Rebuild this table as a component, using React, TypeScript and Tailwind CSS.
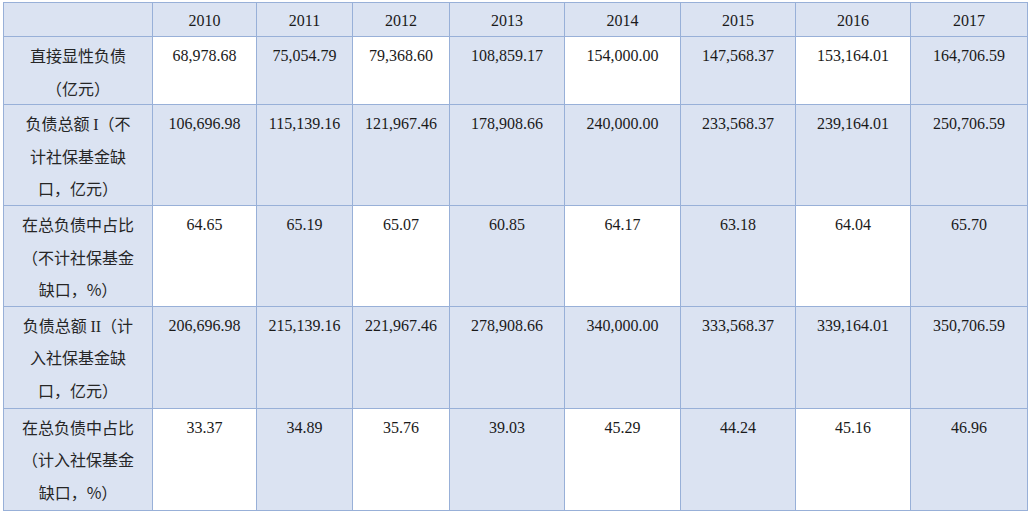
const years = ['2010', '2011', '2012', '2013', '2014', '2015', '2016', '2017'];

const serif = "font-[family-name:'Liberation_Serif','Times_New_Roman',serif]";

const rows: { label: React.ReactNode[]; values: string[]; striped: boolean; h: string }[] = [
  {
    label: ['直接显性负债', '（亿元）'],
    values: ['68,978.68', '75,054.79', '79,368.60', '108,859.17', '154,000.00', '147,568.37', '153,164.01', '164,706.59'],
    striped: true,
    h: 'h-[68px]',
  },
  {
    label: [
      <>
        负债总额 <span className={`${serif} leading-none`}>I</span>（不
      </>,
      '计社保基金缺',
      '口，亿元）',
    ],
    values: ['106,696.98', '115,139.16', '121,967.46', '178,908.66', '240,000.00', '233,568.37', '239,164.01', '250,706.59'],
    striped: false,
    h: 'h-[101px]',
  },
  {
    label: ['在总负债中占比', '（不计社保基金', '缺口，%）'],
    values: ['64.65', '65.19', '65.07', '60.85', '64.17', '63.18', '64.04', '65.70'],
    striped: true,
    h: 'h-[100px]',
  },
  {
    label: [
      <>
        负债总额 <span className={`${serif} leading-none`}>II</span>（计
      </>,
      '入社保基金缺',
      '口，亿元）',
    ],
    values: ['206,696.98', '215,139.16', '221,967.46', '278,908.66', '340,000.00', '333,568.37', '339,164.01', '350,706.59'],
    striped: false,
    h: 'h-[102px]',
  },
  {
    label: ['在总负债中占比', '（计入社保基金', '缺口，%）'],
    values: ['33.37', '34.89', '35.76', '39.03', '45.29', '44.24', '45.16', '46.96'],
    striped: true,
    h: 'h-[102px]',
  },
];

const widths = ['w-[149px]', 'w-[104px]', 'w-[96px]', 'w-[97px]', 'w-[115px]', 'w-[116px]', 'w-[115px]', 'w-[115px]', 'w-[117px]'];

export default function App() {
  return (
    <div className="h-[516px] w-[1034px] bg-white pl-[3px] pt-[2px]">
      <table className="w-[1025px] table-fixed border-collapse text-[#1a1a1a]">
        <colgroup>
          {widths.map((w, i) => (
            <col key={i} className={w} />
          ))}
        </colgroup>
        <thead>
          <tr className="h-[34px]">
            <th className="border border-[#98b0d8] bg-[#dbe3f2] p-0" />
            {years.map((y) => (
              <th
                key={y}
                className={`border border-[#98b0d8] bg-[#dbe3f2] p-0 pt-[2px] text-center align-middle ${serif} text-[16px] font-normal leading-[30px]`}
              >
                {y}
              </th>
            ))}
          </tr>
        </thead>
        <tbody>
          {rows.map((row, ri) => (
            <tr key={ri} className={row.h}>
              <td className="border border-[#98b0d8] bg-[#dbe3f2] p-0 pt-[2px] text-center align-top font-[family-name:'Noto_Sans_CJK_SC',sans-serif] text-[16px] leading-[32.5px] text-[#262626]">
                {row.label.map((l, li) => (
                  <div key={li}>{l}</div>
                ))}
              </td>
              {row.values.map((v, vi) => (
                <td
                  key={vi}
                  className={`border border-[#98b0d8] p-0 pt-[2px] text-center align-top ${serif} text-[16px] leading-[33px] ${
                    row.striped && vi % 2 === 0 ? 'bg-white' : 'bg-[#dbe3f2]'
                  }`}
                >
                  {v}
                </td>
              ))}
            </tr>
          ))}
        </tbody>
      </table>
    </div>
  );
}
